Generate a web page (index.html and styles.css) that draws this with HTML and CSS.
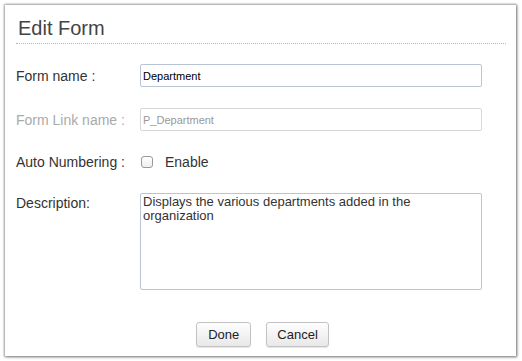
FILE: index.html
```html
<!DOCTYPE html>
<html>
<head>
  <meta charset="UTF-8">
  <title>Edit Form</title>
  <link rel="stylesheet" href="styles.css">
</head>
<body>
  <div class="dialog">
    <h1 class="title">Edit Form</h1>
    <div class="row row-name">
      <label class="label">Form name :</label>
      <input type="text" class="field" value="Department">
    </div>
    <div class="row row-link disabled">
      <label class="label">Form Link name :</label>
      <input type="text" class="field" value="P_Department" disabled>
    </div>
    <div class="row row-check">
      <label class="label">Auto Numbering :</label>
      <span class="checkbox"></span>
      <span class="check-text">Enable</span>
    </div>
    <div class="row row-desc">
      <label class="label">Description:</label>
      <textarea class="desc">Displays the various departments added in the organization</textarea>
    </div>
    <div class="buttons">
      <button class="btn">Done</button>
      <button class="btn btn-cancel">Cancel</button>
    </div>
  </div>
</body>
</html>
```

FILE: styles.css
```css
html, body {
  margin: 0;
  height: 100%;
  overflow: hidden;
  background: #ffffff;
  font-family: "Liberation Sans", Arial, sans-serif;
}
.dialog {
  box-sizing: border-box;
  margin: 5px 0 0 5px;
  width: 511px;
  height: 351px;
  overflow: hidden;
  background: #fff;
  box-shadow: 0 0 2px 1px rgba(0, 0, 0, 0.35), 1px 1px 3px rgba(0, 0, 0, 0.3);
  padding: 0 10px 0 11px;
}
.title {
  margin: 0;
  padding: 13px 0 4px 2px;
  font-size: 20px;
  font-weight: normal;
  color: #444;
  line-height: 21px;
  border-bottom: 1px dotted #b8b8b8;
}
.row {
  display: flex;
  align-items: center;
  height: 23px;
}
.row-name {
  margin-top: 20px;
}
.row-link {
  margin-top: 21px;
}
.row-check {
  margin-top: 19px;
}
.row-desc {
  align-items: flex-start;
  height: 97px;
  margin-top: 20px;
}
.label {
  width: 124px;
  font-size: 14px;
  color: #333;
}
.field {
  box-sizing: border-box;
  width: 342px;
  height: 23px;
  margin: 0;
  border: 1px solid #b9c4d6;
  border-radius: 2px;
  padding: 0 2px;
  font-family: "Liberation Sans", Arial, sans-serif;
  font-size: 11px;
  color: #000;
  background: #fff;
}
.disabled .label {
  color: #aaa;
}
.disabled .field {
  border-color: #d8d8d8;
  color: #999;
}
.checkbox {
  box-sizing: border-box;
  width: 12px;
  height: 12px;
  margin: 1px 12px 0 1px;
  border: 1px solid #999;
  border-radius: 3px;
  background: linear-gradient(#fff, #eee);
}
.check-text {
  font-size: 14px;
  color: #333;
}
.row-desc .label {
  padding-top: 2px;
}
.desc {
  box-sizing: border-box;
  width: 342px;
  height: 97px;
  margin: 0;
  border: 1px solid #b9c4d6;
  border-radius: 2px;
  padding: 1px 2px;
  font-family: "Liberation Sans", Arial, sans-serif;
  font-size: 13px;
  line-height: 14px;
  color: #333;
  resize: none;
}
.buttons {
  display: flex;
  justify-content: center;
  gap: 15px;
  margin-top: 32px;
  padding-left: 3px;
}
.btn {
  height: 25px;
  padding: 0 11px;
  border: 1px solid #c2c2c2;
  border-radius: 3px;
  background: linear-gradient(#fefefe, #e8e8e8);
  font-family: "Liberation Sans", Arial, sans-serif;
  font-size: 13px;
  color: #222;
  box-shadow: 0 1px 1px rgba(0, 0, 0, 0.1);
}
.btn-cancel {
  padding: 0 10px;
}
```
